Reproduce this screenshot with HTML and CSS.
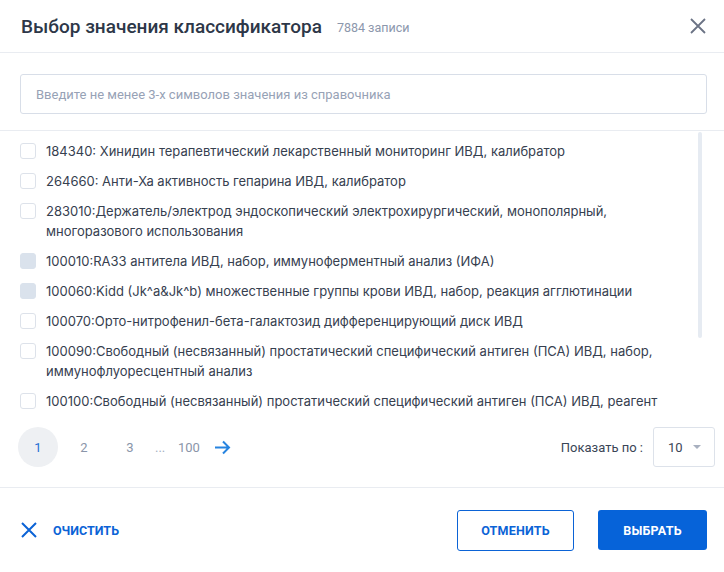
FILE: index.html
```html
<!DOCTYPE html>
<html lang="ru">
<head>
<meta charset="utf-8">
<title>Выбор значения классификатора</title>
<link rel="stylesheet" href="styles.css">
</head>
<body>
<div class="dialog">
  <header class="header">
    <h1 class="title">Выбор значения классификатора</h1>
    <span class="count">7884 записи</span>
    <button class="close" aria-label="Закрыть">
      <svg width="16" height="16" viewBox="0 0 16 16"><path d="M1 1L15 15M15 1L1 15" stroke="#6b7385" stroke-width="1.8" fill="none"/></svg>
    </button>
  </header>

  <div class="search">
    <div class="search-input">Введите не менее 3-х символов значения из справочника</div>
  </div>

  <div class="list-wrap">
    <ul class="list">
      <li class="item"><span class="cb"></span><span class="label">184340: Хинидин терапевтический лекарственный мониторинг ИВД, калибратор</span></li>
      <li class="item"><span class="cb"></span><span class="label">264660: Анти-Ха активность гепарина ИВД, калибратор</span></li>
      <li class="item"><span class="cb"></span><span class="label">283010:Держатель/электрод эндоскопический электрохирургический, монополярный, многоразового использования</span></li>
      <li class="item"><span class="cb cb-disabled"></span><span class="label">100010:RA33 антитела ИВД, набор, иммуноферментный анализ (ИФА)</span></li>
      <li class="item"><span class="cb cb-disabled"></span><span class="label">100060:Kidd (Jk^a&amp;Jk^b) множественные группы крови ИВД, набор, реакция агглютинации</span></li>
      <li class="item"><span class="cb"></span><span class="label">100070:Орто-нитрофенил-бета-галактозид дифференцирующий диск ИВД</span></li>
      <li class="item"><span class="cb"></span><span class="label">100090:Свободный (несвязанный) простатический специфический антиген (ПСА) ИВД, набор, иммунофлуоресцентный анализ</span></li>
      <li class="item"><span class="cb"></span><span class="label">100100:Свободный (несвязанный) простатический специфический антиген (ПСА) ИВД, реагент</span></li>
    </ul>
    <div class="scrollbar"></div>
  </div>

  <div class="pager">
    <div class="pages">
      <span class="page active">1</span>
      <span class="page">2</span>
      <span class="page">3</span>
      <span class="dots">...</span>
      <span class="page-last">100</span>
      <span class="next">
        <svg width="17" height="15" viewBox="0 0 17 15"><path d="M1 7.5H15M9 1.5L15 7.5L9 13.5" stroke="#2784e0" stroke-width="2" fill="none"/></svg>
      </span>
    </div>
    <div class="per-page">
      <span class="per-label">Показать по :</span>
      <div class="select"><span>10</span><span class="caret"></span></div>
    </div>
  </div>

  <footer class="footer">
    <button class="clear">
      <svg width="16" height="16" viewBox="0 0 16 16"><path d="M1 1L15 15M15 1L1 15" stroke="#0b63d6" stroke-width="2" fill="none"/></svg>
      <span>ОЧИСТИТЬ</span>
    </button>
    <div class="actions">
      <button class="btn btn-outline">ОТМЕНИТЬ</button>
      <button class="btn btn-primary">ВЫБРАТЬ</button>
    </div>
  </footer>
</div>
</body>
</html>
```

FILE: styles.css
```css
* { box-sizing: border-box; }
html, body { margin: 0; padding: 0; background: #fff; }
body { font-family: Roboto, "Liberation Sans", sans-serif; color: #2f3a4b; }
button { font-family: inherit; background: none; border: 0; padding: 0; cursor: pointer; }

.dialog { width: 724px; height: 572px; position: relative; }

.header {
  height: 53px;
  display: flex;
  align-items: center;
  padding: 0 18px 0 21px;
  border-bottom: 1px solid #e9ecf1;
}
.title {
  margin: 0;
  font-size: 19px;
  font-weight: 500;
  color: #2d3748;
  letter-spacing: 0;
}
.count {
  margin-left: 15px;
  margin-top: 2px;
  font-size: 12.5px;
  color: #8c97ac;
}
.close { margin-left: auto; width: 16px; height: 16px; display: flex; }

.search {
  padding: 21px 17px 16px 20px;
  border-bottom: 1px solid #e9ecf1;
}
.search-input {
  height: 40px;
  border: 1px solid #d8dee8;
  border-radius: 3px;
  padding: 0 15px;
  display: flex;
  align-items: center;
  font-size: 13px;
  color: #97a2b6;
}

.list-wrap { position: relative; }
.list {
  list-style: none;
  margin: 0;
  padding: 10px 24px 0 20px;
  display: flex;
  flex-direction: column;
  gap: 10px;
  font-family: Inter, Roboto, sans-serif;
  font-size: 13px;
  line-height: 20px;
  color: #36404f;
}
.item { display: flex; align-items: flex-start; }
.cb {
  flex: none;
  width: 16px;
  height: 16px;
  margin-top: 2px;
  margin-right: 10px;
  border: 1px solid #dde2ea;
  border-radius: 3px;
  background: #fff;
}
.cb-disabled { background: #dae2ec; border-color: #dae2ec; }
.label { flex: 1; }

.scrollbar {
  position: absolute;
  left: 698px;
  top: 1px;
  width: 4px;
  height: 206px;
  border-radius: 2px;
  background: #e6ebf2;
}

.pager {
  display: flex;
  align-items: center;
  justify-content: space-between;
  padding: 16px 9px 20px 18px;
  border-bottom: 1px solid #e9ecf1;
}
.pages { display: flex; align-items: center; font-size: 13px; color: #8a95a9; }
.page {
  width: 40px;
  height: 40px;
  border-radius: 50%;
  display: flex;
  align-items: center;
  justify-content: center;
  margin-right: 6px;
}
.page.active { background: #eef0f3; color: #1f6fd4; }
.dots { margin-left: -1px; width: 12px; color: #a6afbf; }
.page-last { margin-left: 11px; }
.next { margin-left: 14px; display: flex; }

.per-page { display: flex; align-items: center; }
.per-label { font-size: 13px; color: #3a4556; margin-right: 10px; }
.select {
  width: 62px;
  height: 40px;
  border: 1px solid #dde2ea;
  border-radius: 3px;
  display: flex;
  align-items: center;
  padding-left: 14px;
  font-size: 13px;
  color: #3a4556;
}
.caret {
  margin-left: 10px;
  width: 0;
  height: 0;
  border-left: 4px solid transparent;
  border-right: 4px solid transparent;
  border-top: 4px solid #a8b0bf;
}

.footer {
  height: 84px;
  display: flex;
  align-items: center;
  justify-content: space-between;
  padding: 0 17px 0 21px;
}
.clear { display: flex; align-items: center; gap: 16px; color: #0b63d6; font-size: 12.5px; font-weight: 700; }
.actions { display: flex; gap: 24px; align-items: center; }
.btn {
  height: 41px;
  border-radius: 3px;
  font-size: 12.5px;
  font-weight: 700;
  letter-spacing: 0.2px;
}
.btn-outline { width: 117px; border: 1px solid #0b63d6; color: #0b63d6; background: #fff; }
.btn-primary { width: 109px; height: 40px; background: #0663d9; color: #fff; }
```
